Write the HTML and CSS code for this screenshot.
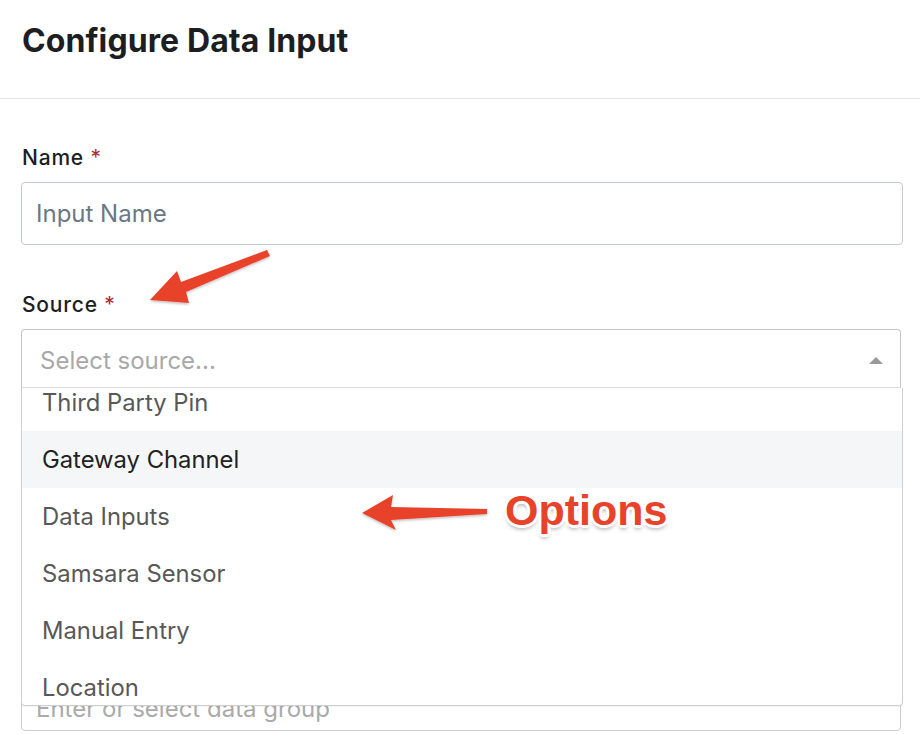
FILE: index.html
```html
<!DOCTYPE html>
<html>

<head>
  <meta charset="utf-8">
  <title>Configure Data Input</title>
  <link rel="stylesheet" href="styles.css">
</head>

<body>
  <div class="header">
    <h1>Configure Data Input</h1>
  </div>

  <form class="form">
    <div class="field">
      <label>Name <span class="req">*</span></label>
      <input type="text" class="text-input" placeholder="Input Name">
    </div>

    <div class="field">
      <label>Source <span class="req">*</span></label>
      <div class="select-wrap">
        <div class="select open">
          <span class="select-placeholder">Select source...</span>
          <span class="caret"></span>
        </div>
        <div class="menu">
          <div class="menu-list">
            <div class="option">Third Party Pin</div>
            <div class="option focused">Gateway Channel</div>
            <div class="option">Data Inputs</div>
            <div class="option">Samsara Sensor</div>
            <div class="option">Manual Entry</div>
            <div class="option">Location</div>
          </div>
        </div>
      </div>
    </div>

    <div class="field group-field">
      <label>Data Group</label>
      <input type="text" class="text-input short" placeholder="Enter or select data group">
    </div>
  </form>

  <!-- annotations over the screenshot -->
  <svg class="notes" width="920" height="734" viewBox="0 0 920 734">
    <defs>
      <filter id="soft" x="-20%" y="-20%" width="140%" height="140%">
        <feDropShadow dx="0" dy="1.5" stdDeviation="1.2" flood-color="#000" flood-opacity="0.25"/>
      </filter>
    </defs>
    <polygon filter="url(#soft)" fill="#e8432a"
      points="150,300 177,271 181,282 267,250 270,256 186,292 189,303"/>
    <polygon filter="url(#soft)" fill="#e8432a"
      points="362,513 393,495 391,507 487,509 487,514 391,520 396,530"/>
  </svg>
  <div class="callout">Options</div>
</body>

</html>
```

FILE: styles.css
```css
* {
  box-sizing: border-box;
}

body {
  margin: 0;
  font-family: Inter, "Noto Sans", sans-serif;
  color: #1c1e22;
  background: #fff;
  overflow: hidden;
  height: 734px;
}

.header {
  height: 99px;
  padding: 0 22px;
  border-bottom: 1px solid #e3e5e8;
}

.header h1 {
  margin: 0;
  padding-top: 21px;
  font-size: 32px;
  line-height: 40px;
  font-weight: 700;
  letter-spacing: 0.1px;
}

.form {
  padding: 47px 17px 0 21px;
}

.field {
  margin-bottom: 48px;
}

.field label {
  display: block;
  font-size: 21px;
  line-height: 24px;
  font-weight: 500;
  letter-spacing: 0.8px;
  margin-bottom: 12px;
  margin-left: 1px;
}

.field .req {
  color: #b3262a;
  font-weight: 400;
}

.text-input {
  display: block;
  width: 100%;
  height: 63px;
  padding: 0 14px;
  border: 1.5px solid #c4c8cf;
  border-radius: 4px;
  font-family: inherit;
  font-size: 24px;
  outline: none;
}

.text-input::placeholder {
  color: #6c7785;
}

.text-input.short {
  width: calc(100% - 2px);
  height: 59px;
  padding-top: 13px;
  border-color: #cbcbcb;
}

.text-input.short::placeholder {
  color: #aaa;
}

.select-wrap {
  position: relative;
  width: calc(100% - 2px);
}

.select {
  display: flex;
  align-items: center;
  justify-content: space-between;
  height: 59px;
  padding: 3px 17px 0 18px;
  border: 1.5px solid #c6c6c6;
  border-bottom-color: #dedede;
  border-radius: 4px 4px 0 0;
}

.select-placeholder {
  font-size: 24px;
  color: #a8a8a8;
}

.caret {
  width: 0;
  height: 0;
  border-left: 7.5px solid transparent;
  border-right: 7.5px solid transparent;
  border-bottom: 7px solid #999;
}

/* open dropdown sits over the fields below */
.menu {
  position: absolute;
  top: 100%;
  left: 0;
  right: -2px;
  height: 318px;
  overflow: hidden;
  background: #fff;
  border: 1.5px solid #cfcfcf;
  border-top: none;
  border-radius: 0 0 4px 4px;
  box-shadow: 0 1px 1px rgba(0, 0, 0, 0.05);
  z-index: 2;
}

.menu-list {
  margin-top: -14.6px;
}

.option {
  height: 57.2px;
  display: flex;
  align-items: center;
  padding-left: 20px;
  font-size: 23.8px;
  color: #585858;
}

.option.focused {
  background: #f5f6f8;
  color: #222;
}

.group-field {
  margin-top: 248px;
  margin-bottom: 0;
}

.notes {
  position: absolute;
  top: 0;
  left: 0;
  z-index: 3;
  pointer-events: none;
}

.callout {
  position: absolute;
  left: 505px;
  top: 485px;
  z-index: 3;
  font-family: "Liberation Sans", Arial, sans-serif;
  font-weight: 700;
  font-size: 43px;
  line-height: 50px;
  color: #e8432a;
  text-shadow:
    2px 0 0 #fff, -2px 0 0 #fff, 0 2px 0 #fff, 0 -2px 0 #fff,
    2px 2px 0 #fff, -2px -2px 0 #fff, 2px -2px 0 #fff, -2px 2px 0 #fff,
    3px 0 0 #fff, -3px 0 0 #fff, 0 3px 0 #fff, 0 -3px 0 #fff,
    0 4px 4px rgba(0, 0, 0, 0.35);
}
```
